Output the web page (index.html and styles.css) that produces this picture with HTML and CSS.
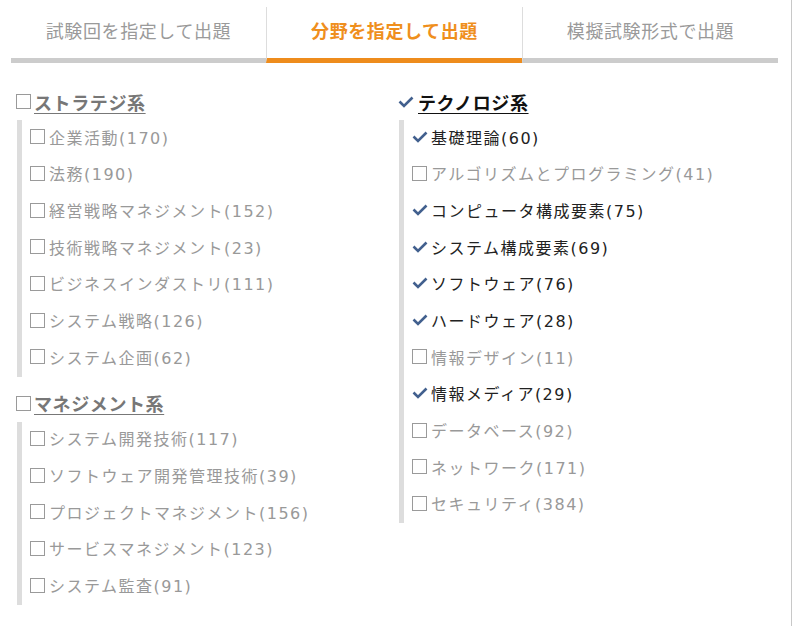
FILE: index.html
```html
<!DOCTYPE html>
<html lang="ja">
<head>
    <meta charset="UTF-8">
    <title>分野を指定して出題</title>
    <link rel="stylesheet" href="styles.css">
</head>
<body>
    <div class="page">
        <ul class="tabs">
            <li class="tab">試験回を指定して出題</li>
            <li class="tab active">分野を指定して出題</li>
            <li class="tab">模擬試験形式で出題</li>
        </ul>

        <div class="fields">
            <div class="col">
                <div class="group">
                    <div class="group-head"><span class="box"></span><span class="group-name">ストラテジ系</span></div>
                    <ul class="items">
                        <li><span class="box"></span>企業活動(170)</li>
                        <li><span class="box"></span>法務(190)</li>
                        <li><span class="box"></span>経営戦略マネジメント(152)</li>
                        <li><span class="box"></span>技術戦略マネジメント(23)</li>
                        <li><span class="box"></span>ビジネスインダストリ(111)</li>
                        <li><span class="box"></span>システム戦略(126)</li>
                        <li><span class="box"></span>システム企画(62)</li>
                    </ul>
                </div>
                <div class="group">
                    <div class="group-head"><span class="box"></span><span class="group-name">マネジメント系</span></div>
                    <ul class="items">
                        <li><span class="box"></span>システム開発技術(117)</li>
                        <li><span class="box"></span>ソフトウェア開発管理技術(39)</li>
                        <li><span class="box"></span>プロジェクトマネジメント(156)</li>
                        <li><span class="box"></span>サービスマネジメント(123)</li>
                        <li><span class="box"></span>システム監査(91)</li>
                    </ul>
                </div>
            </div>

            <div class="col">
                <div class="group">
                    <div class="group-head checked"><svg class="check" viewBox="0 0 16 12"><polyline points="1.5,5.5 6,10 14.5,1.5"/></svg><span class="group-name">テクノロジ系</span></div>
                    <ul class="items">
                        <li class="checked"><svg class="check" viewBox="0 0 16 12"><polyline points="1.5,5.5 6,10 14.5,1.5"/></svg>基礎理論(60)</li>
                        <li><span class="box"></span>アルゴリズムとプログラミング(41)</li>
                        <li class="checked"><svg class="check" viewBox="0 0 16 12"><polyline points="1.5,5.5 6,10 14.5,1.5"/></svg>コンピュータ構成要素(75)</li>
                        <li class="checked"><svg class="check" viewBox="0 0 16 12"><polyline points="1.5,5.5 6,10 14.5,1.5"/></svg>システム構成要素(69)</li>
                        <li class="checked"><svg class="check" viewBox="0 0 16 12"><polyline points="1.5,5.5 6,10 14.5,1.5"/></svg>ソフトウェア(76)</li>
                        <li class="checked"><svg class="check" viewBox="0 0 16 12"><polyline points="1.5,5.5 6,10 14.5,1.5"/></svg>ハードウェア(28)</li>
                        <li><span class="box"></span>情報デザイン(11)</li>
                        <li class="checked"><svg class="check" viewBox="0 0 16 12"><polyline points="1.5,5.5 6,10 14.5,1.5"/></svg>情報メディア(29)</li>
                        <li><span class="box"></span>データベース(92)</li>
                        <li><span class="box"></span>ネットワーク(171)</li>
                        <li><span class="box"></span>セキュリティ(384)</li>
                    </ul>
                </div>
            </div>
        </div>
    </div>
</body>
</html>
```

FILE: styles.css
```css
body {
    margin: 0;
    padding: 0;
    background-color: #fff;
    font-family: "DejaVu Sans", "Noto Sans CJK JP", sans-serif;
}
.page {
    width: 791px;
    height: 626px;
    border-right: 1px solid #c8c8c8;
    overflow: hidden;
}
ul {
    list-style-type: none;
    margin: 0;
    padding: 0;
}

/* タブ */
.tabs {
    display: flex;
    margin: 7px 0 0 11px;
    width: 767px;
}
.tab {
    flex: 1;
    height: 51px;
    line-height: 50px;
    text-align: center;
    font-size: 18px;
    letter-spacing: 0.6px;
    color: #9a9a9a;
    border-bottom: 5px solid #cccccc;
}
.tab + .tab {
    border-left: 1px solid #dddddd;
}
.tab.active {
    color: #ef8f1d;
    font-weight: bold;
    border-bottom-color: #ee8c1c;
}

/* 分野 */
.fields {
    display: flex;
    margin: 21px 0 0 16px;
}
.col {
    width: 382px;
}
.group {
    margin-bottom: 9px;
}
.group-head {
    display: flex;
    align-items: center;
    height: 36px;
    padding-bottom: 1px;
    box-sizing: border-box;
    font-size: 18px;
    font-weight: bold;
    letter-spacing: 0.6px;
    color: #777;
}
.group-head .group-name {
    text-decoration: underline;
    text-underline-offset: 3px;
}
.group-head .box {
    width: 13px;
    height: 13px;
    margin: 0 3px 0 0;
}
.group-head.checked {
    color: #111;
}
.group-head .check {
    margin: 1px 4px 0 0;
}
.items {
    border-left: 5px solid #dddddd;
    padding-left: 8px;
    margin-left: 1px;
}
.items li {
    display: flex;
    align-items: center;
    height: 36.67px;
    padding-bottom: 3px;
    box-sizing: border-box;
    font-size: 16px;
    letter-spacing: 1.5px;
    color: #999;
}
.items li.checked {
    color: #222;
}
.box {
    display: inline-block;
    width: 13px;
    height: 13px;
    border: 1px solid #9a9a9a;
    margin-right: 4px;
    flex: none;
}
.check {
    width: 16px;
    height: 12px;
    margin-right: 3px;
    flex: none;
}
.check polyline {
    fill: none;
    stroke: #42608e;
    stroke-width: 2.6;
}
```
